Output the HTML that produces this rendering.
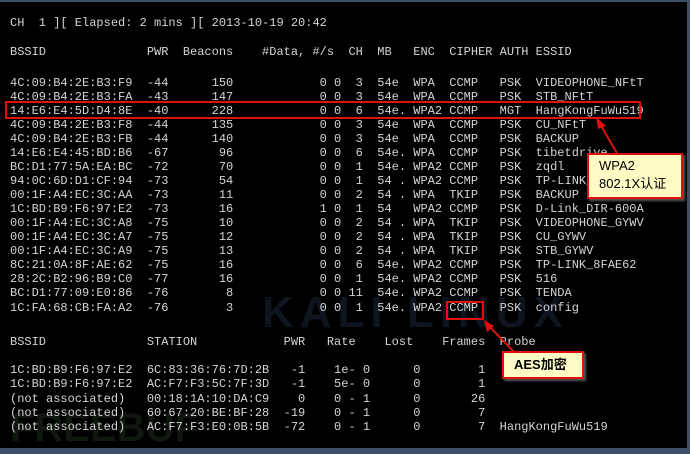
<!DOCTYPE html>
<html><head><meta charset="utf-8"><style>
html,body{margin:0;padding:0;}
body{width:690px;height:454px;background:#3b4f68;position:relative;overflow:hidden;}
#term{position:absolute;left:0;top:2px;width:687px;height:446px;background:#000;overflow:hidden;}
.l{position:absolute;left:10px;font-family:"Liberation Mono",monospace;font-size:12px;color:#d4d4d4;white-space:pre;line-height:14px;}
.box{position:absolute;border:2px solid #e01010;}
.call{position:absolute;background:#fffbc4;border:2px solid #e01010;font-family:"Liberation Sans","Noto Sans CJK SC",sans-serif;color:#000;font-size:13px;line-height:18px;box-shadow:2px 2px 2px #555;}
.wm{position:absolute;font-family:"Liberation Sans",sans-serif;font-weight:bold;}
</style></head><body>
<div id="term">
<div class="wm" style="left:262px;top:286px;font-size:44px;letter-spacing:6px;color:#0e151e;">KALI LINUX</div>
<div class="wm" style="left:10px;top:404px;font-size:40px;color:#0f170f;">FREEBUF</div>
</div>
<div class="l" style="top:16px">CH  1 ][ Elapsed: 2 mins ][ 2013-10-19 20:42</div>
<div class="l" style="top:45px">BSSID              PWR  Beacons    #Data, #/s  CH  MB   ENC  CIPHER AUTH ESSID</div>
<div class="l" style="top:76px">4C:09:B4:2E:B3:F9  -44      150            0 0  3  54e  WPA  CCMP   PSK  VIDEOPHONE_NFtT</div>
<div class="l" style="top:90px">4C:09:B4:2E:B3:FA  -43      147            0 0  3  54e  WPA  CCMP   PSK  STB_NFtT</div>
<div class="l" style="top:104px">14:E6:E4:5D:D4:8E  -40      228            0 0  6  54e. WPA2 CCMP   MGT  HangKongFuWu519</div>
<div class="l" style="top:118px">4C:09:B4:2E:B3:F8  -44      135            0 0  3  54e  WPA  CCMP   PSK  CU_NFtT</div>
<div class="l" style="top:132px">4C:09:B4:2E:B3:FB  -44      140            0 0  3  54e  WPA  CCMP   PSK  BACKUP</div>
<div class="l" style="top:146px">14:E6:E4:45:BD:B6  -67       96            0 0  6  54e. WPA  CCMP   PSK  tibetdrive</div>
<div class="l" style="top:160px">BC:D1:77:5A:EA:BC  -72       70            0 0  1  54e. WPA2 CCMP   PSK  zqdl</div>
<div class="l" style="top:174px">94:0C:6D:D1:CF:94  -73       54            0 0  1  54 . WPA2 CCMP   PSK  TP-LINK_</div>
<div class="l" style="top:188px">00:1F:A4:EC:3C:AA  -73       11            0 0  2  54 . WPA  TKIP   PSK  BACKUP</div>
<div class="l" style="top:202px">1C:BD:B9:F6:97:E2  -73       16            1 0  1  54   WPA2 CCMP   PSK  D-Link_DIR-600A</div>
<div class="l" style="top:216px">00:1F:A4:EC:3C:A8  -75       10            0 0  2  54 . WPA  TKIP   PSK  VIDEOPHONE_GYWV</div>
<div class="l" style="top:230px">00:1F:A4:EC:3C:A7  -75       12            0 0  2  54 . WPA  TKIP   PSK  CU_GYWV</div>
<div class="l" style="top:244px">00:1F:A4:EC:3C:A9  -75       13            0 0  2  54 . WPA  TKIP   PSK  STB_GYWV</div>
<div class="l" style="top:258px">8C:21:0A:8F:AE:62  -75       16            0 0  6  54e. WPA2 CCMP   PSK  TP-LINK_8FAE62</div>
<div class="l" style="top:272px">28:2C:B2:96:B9:C0  -77       16            0 0  1  54e. WPA2 CCMP   PSK  516</div>
<div class="l" style="top:286px">BC:D1:77:09:E0:86  -76        8            0 0 11  54e. WPA2 CCMP   PSK  TENDA</div>
<div class="l" style="top:300.5px">1C:FA:68:CB:FA:A2  -76        3            0 0  1  54e. WPA2 CCMP   PSK  config</div>
<div class="l" style="top:335px">BSSID              STATION            PWR   Rate    Lost    Frames  Probe</div>
<div class="l" style="top:363px">1C:BD:B9:F6:97:E2  6C:83:36:76:7D:2B   -1    1e- 0      0        1</div>
<div class="l" style="top:377px">1C:BD:B9:F6:97:E2  AC:F7:F3:5C:7F:3D   -1    5e- 0      0        1</div>
<div class="l" style="top:391.5px">(not associated)   00:18:1A:10:DA:C9    0    0 - 1      0       26</div>
<div class="l" style="top:406px">(not associated)   60:67:20:BE:BF:28  -19    0 - 1      0        7</div>
<div class="l" style="top:420px">(not associated)   AC:F7:F3:E0:0B:5B  -72    0 - 1      0        7  HangKongFuWu519</div>
<div class="box" style="left:5px;top:101px;width:632px;height:14px;"></div>
<div class="box" style="left:446px;top:301px;width:34px;height:15px;"></div>
<svg style="position:absolute;left:0;top:0" width="690" height="454">
<line x1="618" y1="155" x2="600" y2="124" stroke="#e01010" stroke-width="2"/>
<polygon points="596,117 606,126 598,129" fill="#e01010"/>
<line x1="514" y1="352" x2="488" y2="325" stroke="#e01010" stroke-width="2"/>
<polygon points="484,320 494,326 487,332" fill="#e01010"/>
</svg>
<div class="call" style="left:587px;top:153px;width:82px;height:40px;padding:2px 0 0 10px;">WPA2<br>802.1X认证</div>
<div class="call" style="left:502px;top:351px;width:68px;height:24px;padding:0 0 0 10px;line-height:24px;font-weight:bold;">AES加密</div>
</body></html>
